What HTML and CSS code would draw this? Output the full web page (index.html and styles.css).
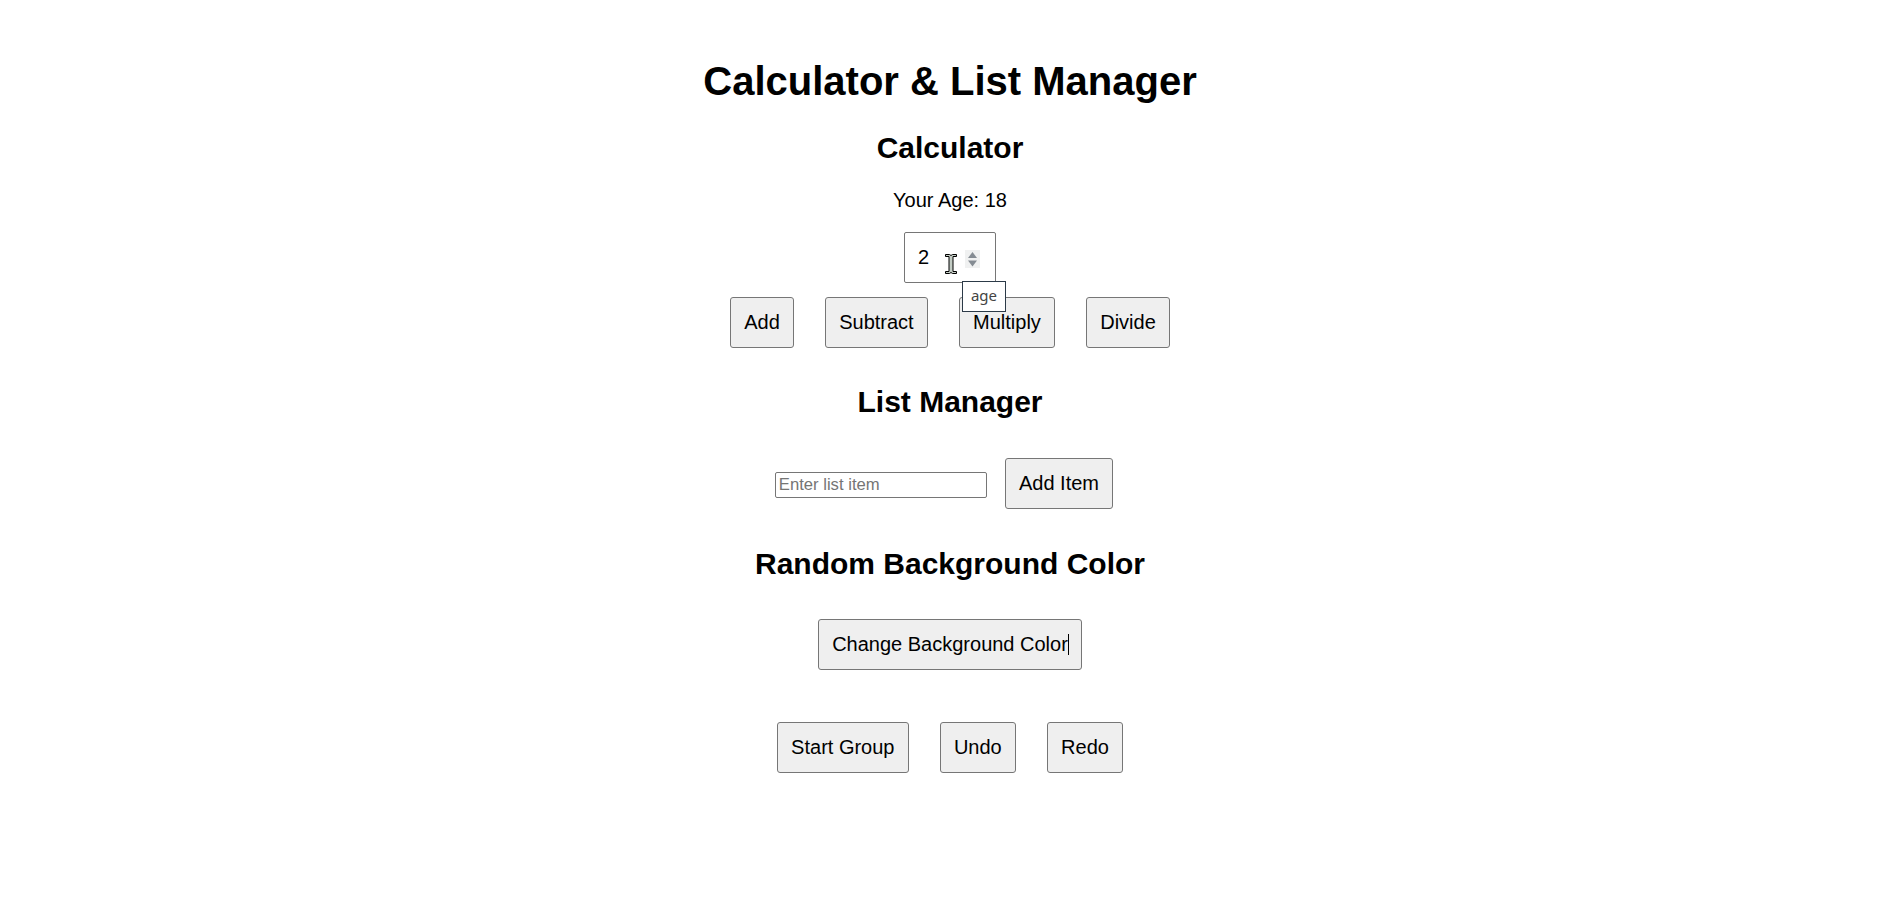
FILE: index.html
```html
<!DOCTYPE html>
<html lang="en">
<head>
<meta charset="utf-8">
<title>Calculator &amp; List Manager</title>
<link rel="stylesheet" href="styles.css">
</head>
<body>
<main class="page">
  <h1 class="title">Calculator &amp; List Manager</h1>

  <h2 class="section-title calc-title">Calculator</h2>
  <p class="age">Your Age: 18</p>
  <div class="num-field">
    <input class="num-input" type="text" value="2" aria-label="age">
    <svg class="spinner" width="15" height="18" viewBox="0 0 15 18">
      <rect x="0" y="0" width="15" height="18" fill="#f0f1f1"/>
      <path d="M7.5 2 L12 8 L3 8 Z" fill="#858c93"/>
      <path d="M7.5 16.5 L12 10.5 L3 10.5 Z" fill="#858c93"/>
    </svg>
    <svg class="ibeam" width="12" height="20" viewBox="0 0 12 20">
      <path d="M0.5 0.5h4l1.5 1 1.5-1h4v2h-3.5v15h3.5v2h-4l-1.5-1-1.5 1h-4v-2h3.5v-15h-3.5z" fill="#c3ccc4" stroke="#000" stroke-width="1"/>
    </svg>
    <div class="tooltip">age</div>
  </div>
  <div class="btn-row ops">
    <button class="btn">Add</button>
    <button class="btn">Subtract</button>
    <button class="btn">Multiply</button>
    <button class="btn">Divide</button>
  </div>

  <h2 class="section-title list-title">List Manager</h2>
  <div class="list-row">
    <input class="text-input" type="text" placeholder="Enter list item">
    <button class="btn">Add Item</button>
  </div>

  <h2 class="section-title color-title">Random Background Color</h2>
  <div class="btn-row change-row">
    <button class="btn">Change Background Color<span class="caret"></span></button>
  </div>

  <div class="btn-row history">
    <button class="btn">Start Group</button>
    <button class="btn">Undo</button>
    <button class="btn">Redo</button>
  </div>
</main>
</body>
</html>
```

FILE: styles.css
```css
html, body {
  margin: 0;
  padding: 0;
  background: #ffffff;
}

body {
  font-family: "Liberation Sans", Arial, sans-serif;
  color: #000;
}

.page {
  display: flex;
  flex-direction: column;
  align-items: center;
  padding-top: 58px;
  text-align: center;
}

.title {
  margin: 0;
  font-size: 40px;
  line-height: 46px;
  font-weight: bold;
}

.section-title {
  margin: 26px 0 0;
  font-size: 30px;
  line-height: 34px;
  font-weight: bold;
}

.calc-title {
  margin-top: 27px;
}

.age {
  margin: 24px 0 0;
  font-size: 20px;
  line-height: 23px;
}

.num-field {
  position: relative;
  margin-top: 20px;
  box-sizing: border-box;
  width: 92px;
  height: 51px;
  border: 1px solid #767676;
  border-radius: 2px;
  display: flex;
  align-items: center;
  padding: 0 15px 0 13px;
  background: #fff;
}

.num-input {
  flex: 1;
  min-width: 0;
  border: 0;
  padding: 0;
  margin: 0;
  outline: none;
  background: transparent;
  font-family: "Liberation Sans", Arial, sans-serif;
  font-size: 20px;
  line-height: 23px;
  color: #000;
}

.spinner {
  flex: none;
  margin-top: 2px;
}

.ibeam {
  position: absolute;
  left: 40px;
  top: 21px;
}

.tooltip {
  position: absolute;
  left: 57px;
  top: 48px;
  z-index: 5;
  box-sizing: border-box;
  width: 44px;
  height: 31px;
  border: 1px solid #2c3a48;
  background: #fff;
  font-family: "Noto Sans", "Open Sans", sans-serif;
  font-size: 15px;
  line-height: 27px;
  color: #444;
  text-align: center;
}

.btn-row {
  display: flex;
  justify-content: center;
  gap: 31px;
}

.ops {
  margin-top: 14px;
}

.btn {
  box-sizing: border-box;
  margin: 0;
  height: 51px;
  padding: 0 13.2px;
  border: 1px solid #767676;
  border-radius: 3px;
  background: #efefef;
  font-family: "Liberation Sans", Arial, sans-serif;
  font-size: 20px;
  line-height: 23px;
  color: #000;
}

.caret {
  display: inline-block;
  width: 1px;
  height: 21px;
  margin-right: -1px;
  vertical-align: -4px;
  background: #000;
}

.list-title {
  margin-top: 37px;
}

.list-row {
  margin-top: 39px;
  display: flex;
  align-items: baseline;
  gap: 18px;
  padding-right: 12px;
}

.text-input {
  box-sizing: border-box;
  width: 212px;
  height: 26px;
  margin: 0;
  padding: 1px 3px;
  border: 1px solid #767676;
  border-radius: 2px;
  font-family: "Liberation Sans", Arial, sans-serif;
  font-size: 16.67px;
  color: #000;
  background: #fff;
}

.text-input::placeholder {
  color: #757575;
}

.color-title {
  margin-top: 38px;
}

.change-row {
  margin-top: 38px;
}

.history {
  margin-top: 52px;
}
```
